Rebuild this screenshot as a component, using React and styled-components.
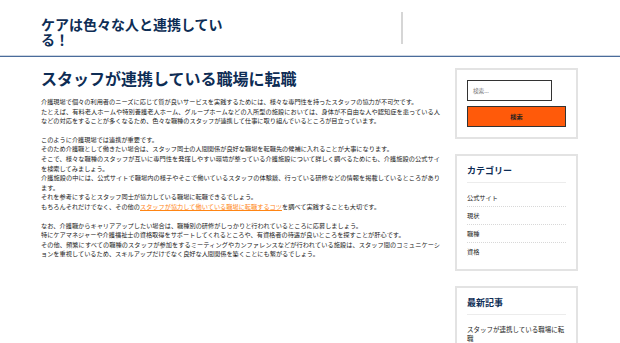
import React from "react";
import styled, { createGlobalStyle } from "styled-components";

const Global = createGlobalStyle`
  html, body { margin: 0; padding: 0; background: #ffffff; }
  body {
    font-family: "Noto Sans CJK JP", "Noto Sans", sans-serif;
    color: #222222;
  }
  * { box-sizing: border-box; }
`;

const Header = styled.header`
  padding: 12px 0 11px 41px;
  border-bottom: 1px solid #ccd5e1;
  box-shadow: 0 1px 0 #4a6c9b;
`;

const Brand = styled.div`
  width: 362px;
  height: 32px;
  padding-top: 5px;
  border-right: 2px solid #d6d6d6;
`;

const SiteTitle = styled.h1`
  margin: 0;
  width: 200px;
  font-size: 14px;
  line-height: 14.5px;
  font-weight: 700;
  color: #0e2d55;
`;

const Layout = styled.div`
  display: grid;
  grid-template-columns: 399px 123px;
  column-gap: 15px;
  padding: 12px 0 0 41px;
  align-items: start;
`;

const Main = styled.main``;

const PostTitle = styled.h2`
  margin: 0 0 9px;
  font-size: 16px;
  line-height: 20px;
  font-weight: 700;
  color: #0e2d55;
`;

const Para = styled.p`
  margin: 0 0 9px;
  font-size: 6.2px;
  line-height: 9.6px;
  color: #222222;
  text-align: justify;
`;

const Link = styled.a`
  color: #ff8514;
  text-decoration: underline;
`;

const Sidebar = styled.aside`
  display: flex;
  flex-direction: column;
  gap: 15px;
`;

const Widget = styled.section`
  border: 2px solid #e3e3e3;
  padding: 10px 10px ${(p) => p.$pb || 9}px;
  background: #fff;
`;

const SearchInput = styled.div`
  width: 85px;
  height: 21px;
  border: 1px solid #333;
  padding: 0 5px;
  display: flex;
  align-items: center;
  font-size: 5.6px;
  color: #777;
  margin-bottom: 5px;
`;

const SearchButton = styled.div`
  width: 99px;
  height: 21px;
  border: 1px solid #333;
  background: #ff5a0a;
  display: flex;
  align-items: center;
  justify-content: center;
  font-size: 6.2px;
  font-weight: 700;
  color: #222;
`;

const WidgetTitle = styled.h3`
  margin: 0;
  padding-bottom: 6px;
  font-size: 9px;
  line-height: 10px;
  font-weight: 700;
  color: #0e2d55;
  border-bottom: 1px solid #ececec;
`;

const List = styled.ul`
  list-style: none;
  margin: 6px 0 0;
  padding: 0;
`;

const Item = styled.li`
  padding: 4px 0;
  font-size: 6.2px;
  line-height: 9px;
  color: #222;
  border-bottom: 1px dotted #d8d8d8;
  &:last-child { border-bottom: none; }
`;

const RecentItem = styled.li`
  padding: 4px 0 0;
  font-size: 6.5px;
  line-height: 9.3px;
  color: #222;
`;

export default function App() {
  return (
    <>
      <Global />
      <Header>
        <Brand>
          <SiteTitle>ケアは色々な人と連携している！</SiteTitle>
        </Brand>
      </Header>
      <Layout>
        <Main>
          <PostTitle>スタッフが連携している職場に転職</PostTitle>
          <Para>
            介護現場で個々の利用者のニーズに応じて質が良いサービスを実践するためには、様々な専門性を持ったスタッフの協力が不可欠です。
            <br />
            たとえば、有料老人ホームや特別養護老人ホーム、グループホームなどの入所型の施設においては、身体が不自由な人や認知症を患っている人などの対応をすることが多くなるため、色々な職種のスタッフが連携して仕事に取り組んでいるところが目立っています。
          </Para>
          <Para>
            このように介護現場では連携が重要です。
            <br />
            そのため介護職として働きたい場合は、スタッフ同士の人間関係が良好な職場を転職先の候補に入れることが大事になります。
            <br />
            そこで、様々な職種のスタッフが互いに専門性を発揮しやすい環境が整っている介護施設について詳しく調べるためにも、介護施設の公式サイを検索してみましょう。
            <br />
            介護施設の中には、公式サイトで職場内の様子やそこで働いているスタッフの体験談、行っている研修などの情報を掲載しているところがあります。
            <br />
            それを参考にするとスタッフ同士が協力している職場に転職できるでしょう。
            <br />
            もちろんそれだけでなく、その他の
            <Link href="#">スタッフが協力して働いている職場に転職するコツ</Link>
            を調べて実践することも大切です。
          </Para>
          <Para>
            なお、介護職からキャリアアップしたい場合は、職種別の研修がしっかりと行われているところに応募しましょう。
            <br />
            特にケアマネジャーや介護福祉士の資格取得をサポートしてくれるところや、有資格者の待遇が良いところを探すことが肝心です。
            <br />
            その他、頻繁にすべての職種のスタッフが参加をするミーティングやカンファレンスなどが行われている施設は、スタッフ間のコミュニケーションを重視しているため、スキルアップだけでなく良好な人間関係を築くことにも繋がるでしょう。
          </Para>
        </Main>
        <Sidebar>
          <Widget $pb={10}>
            <SearchInput>検索...</SearchInput>
            <SearchButton>検索</SearchButton>
          </Widget>
          <Widget>
            <WidgetTitle>カテゴリー</WidgetTitle>
            <List>
              <Item>公式サイト</Item>
              <Item>現状</Item>
              <Item>職種</Item>
              <Item>資格</Item>
            </List>
          </Widget>
          <Widget>
            <WidgetTitle>最新記事</WidgetTitle>
            <List>
              <RecentItem>スタッフが連携している職場に転職</RecentItem>
            </List>
          </Widget>
        </Sidebar>
      </Layout>
    </>
  );
}
